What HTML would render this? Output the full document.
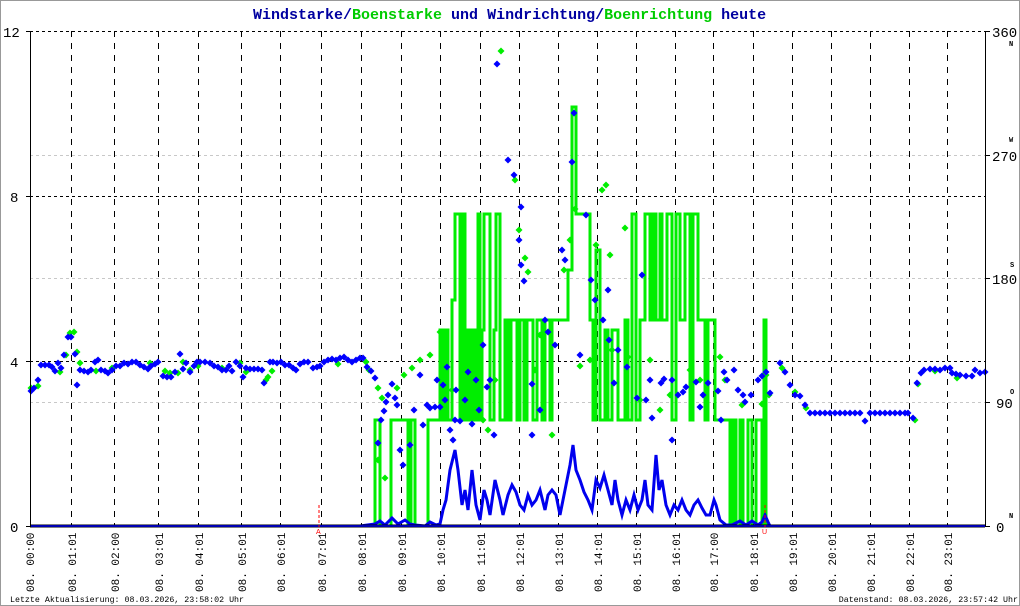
<!DOCTYPE html>
<html><head><meta charset="utf-8"><style>
html,body{margin:0;padding:0;background:#fff}
svg{display:block}
text{font-family:"Liberation Mono",monospace}
</style></head><body>
<svg width="1020" height="606" viewBox="0 0 1020 606" xmlns="http://www.w3.org/2000/svg">
<defs>
<marker id="db" markerUnits="userSpaceOnUse" markerWidth="8" markerHeight="8" refX="4" refY="4" viewBox="0 0 8 8"><path d="M4 0.5L7.5 4L4 7.5L0.5 4Z" fill="#0000ff"/></marker>
<marker id="dg" markerUnits="userSpaceOnUse" markerWidth="8" markerHeight="8" refX="4" refY="4" viewBox="0 0 8 8"><path d="M4 0.5L7.5 4L4 7.5L0.5 4Z" fill="#00ee00"/></marker>
</defs>
<rect x="0.5" y="0.5" width="1019" height="605" fill="#fff" stroke="#999"/>
<text x="253" y="19" font-size="15" font-weight="bold"><tspan fill="#0000a0">Windstarke/</tspan><tspan fill="#00cc00">Boenstarke</tspan><tspan fill="#0000a0"> und </tspan><tspan fill="#0000a0">Windrichtung/</tspan><tspan fill="#00cc00">Boenrichtung</tspan><tspan fill="#0000a0"> heute</tspan></text>
<g stroke="#000" stroke-width="1" stroke-dasharray="3,3">
<line x1="30" y1="31.5" x2="985" y2="31.5"/>
<line x1="30" y1="196.5" x2="985" y2="196.5"/>
<line x1="30" y1="361.5" x2="985" y2="361.5"/>
</g>
<g stroke="#c8c8c8" stroke-width="1" stroke-dasharray="3,3">
<line x1="30" y1="155.5" x2="985" y2="155.5"/>
<line x1="30" y1="278.5" x2="985" y2="278.5"/>
<line x1="30" y1="402.5" x2="985" y2="402.5"/>
</g>
<g stroke="#000" stroke-width="1" stroke-dasharray="6,6">
<line x1="71.5" y1="31" x2="71.5" y2="526"/><line x1="114.5" y1="31" x2="114.5" y2="526"/><line x1="158.5" y1="31" x2="158.5" y2="526"/><line x1="198.5" y1="31" x2="198.5" y2="526"/><line x1="241.5" y1="31" x2="241.5" y2="526"/><line x1="280.5" y1="31" x2="280.5" y2="526"/><line x1="321.5" y1="31" x2="321.5" y2="526"/><line x1="361.5" y1="31" x2="361.5" y2="526"/><line x1="401.5" y1="31" x2="401.5" y2="526"/><line x1="440.5" y1="31" x2="440.5" y2="526"/><line x1="480.5" y1="31" x2="480.5" y2="526"/><line x1="519.5" y1="31" x2="519.5" y2="526"/><line x1="558.5" y1="31" x2="558.5" y2="526"/><line x1="597.5" y1="31" x2="597.5" y2="526"/><line x1="636.5" y1="31" x2="636.5" y2="526"/><line x1="675.5" y1="31" x2="675.5" y2="526"/><line x1="713.5" y1="31" x2="713.5" y2="526"/><line x1="753.5" y1="31" x2="753.5" y2="526"/><line x1="792.5" y1="31" x2="792.5" y2="526"/><line x1="831.5" y1="31" x2="831.5" y2="526"/><line x1="870.5" y1="31" x2="870.5" y2="526"/><line x1="909.5" y1="31" x2="909.5" y2="526"/><line x1="947.5" y1="31" x2="947.5" y2="526"/>
</g>
<path fill="none" stroke="#00ee00" stroke-width="3" d="M360,526 H375 V420 H380 V526 H391 V420 H408 V526 H411 V420 H415 V526 H428 V420 H440 V330 H443 V420 H445 V330 H448 V420 H452 V300 H455 V214 H460 V420 H462 V214 H465 V420 H467 V330 H470 V420 H473 V330 H476 V420 H478 V214 H480 V420 H482 V330 H484 V214 H490 V420 H494 V330 H496 V214 H500 V420 H505 V320 H508 V420 H511 V320 H517 V420 H520 V320 H524 V420 H527 V320 H533 V420 H537 V320 H542 V420 H545 V320 H550 V420 H552 V320 H568 V270 H572 V107 H576 V214 H585 V214 H590 V320 H593 V420 H596 V250 H600 V420 H605 V330 H608 V420 H612 V330 H618 V420 H625 V320 H628 V420 H632 V214 H636 V420 H640 V320 H645 V214 H650 V320 H653 V214 H656 V320 H660 V214 H662 V320 H667 V214 H672 V420 H676 V214 H680 V320 H685 V214 H690 V420 H693 V214 H698 V320 H705 V420 H708 V320 H715 V420 H730 V526 H733 V420 H736 V526 H740 V420 H743 V526 H748 V420 H752 V526 H756 V420 H762 V526 H764 V320 H766 V526 H985"/>
<polyline fill="none" stroke="#0000ee" stroke-width="3" points="360,526 375,524 380,521 385,525 392,518 398,524 405,520 410,524 415,525 425,526 430,522 436,525 440,524 443,510 446,500 450,470 455,450 458,470 462,505 465,490 468,510 472,470 476,505 480,520 484,490 487,500 490,515 495,480 500,500 503,515 508,495 512,485 516,492 520,505 524,510 528,495 532,505 536,500 540,490 545,510 548,495 552,490 556,495 560,515 565,490 570,465 573,445 576,470 580,480 584,492 588,500 592,510 596,480 600,488 604,475 608,490 612,505 615,480 618,500 622,515 626,500 630,510 634,495 638,510 642,500 645,480 648,505 652,510 656,455 659,490 662,480 666,505 670,515 674,505 678,510 682,500 686,510 690,515 694,505 698,500 702,508 706,515 710,515 714,500 716,505 720,520 726,525 732,525 740,521 746,525 752,521 758,525 762,522 765,515 768,522 770,526 985,526"/>
<polyline fill="none" stroke="none" marker-start="url(#dg)" marker-mid="url(#dg)" marker-end="url(#dg)" points="31,388 38,386 60,372 66,355 70,333 74,332 77,352 80,363 96,371 112,368 150,363 165,371 170,373 178,373 183,362 190,370 198,366 222,368 240,363 246,372 266,380 268,377 272,371 338,364 366,362 369,370 378,388 382,398 378,460 385,478 397,388 404,375 412,368 420,360 430,355 440,332 443,360 452,390 466,390 483,420 488,430 495,380 501,51 515,180 519,230 525,258 528,272 535,370 540,335 552,435 564,270 570,240 575,209 580,366 590,360 596,245 602,190 606,185 610,255 612,350 625,228 628,357 640,400 650,360 660,410 670,395 690,370 700,380 720,357 725,380 742,405 762,404 769,395 766,375 782,368 795,392 806,408 915,420 918,384 935,371 957,378"/>
<polyline fill="none" stroke="none" marker-start="url(#db)" marker-mid="url(#db)" marker-end="url(#db)" points="31,391 34,388 38,380 41,365 45,365 49,365 52,367 55,371 58,363 61,368 64,355 68,337 71,337 75,354 77,385 80,370 84,371 88,372 91,370 95,362 98,360 101,370 105,371 108,373 112,370 116,366 120,366 124,363 128,364 132,362 136,362 140,365 144,367 148,369 151,366 155,364 158,362 163,376 167,377 171,377 175,372 180,354 183,369 186,363 190,372 194,366 197,362 200,362 205,362 210,363 214,366 218,367 222,370 226,370 229,366 232,371 236,362 240,366 243,377 246,368 250,369 254,369 258,369 262,370 264,383 270,362 273,362 277,363 281,362 285,365 289,365 293,368 296,370 300,364 304,362 308,362 313,368 317,367 320,366 324,362 328,360 332,359 336,360 340,358 344,357 348,360 352,362 356,360 360,358 363,358 367,367 371,371 375,378 378,443 381,420 384,411 386,402 388,395 392,384 395,398 397,405 400,450 403,465 410,445 414,410 420,375 423,425 427,405 430,408 435,407 437,380 440,407 443,385 445,400 447,367 450,430 453,440 455,420 456,390 460,421 465,400 468,372 472,424 476,380 479,410 483,345 487,387 490,380 494,435 497,64 508,160 514,175 519,240 521,265 524,281 521,207 532,384 532,435 540,410 545,320 548,332 555,345 562,250 565,260 572,162 574,113 580,355 586,215 591,280 595,300 603,320 608,290 609,340 614,383 618,350 627,367 637,398 646,400 652,418 650,380 642,275 661,383 664,379 672,380 672,440 678,395 683,392 686,387 696,382 700,407 703,395 708,383 718,391 721,420 724,372 727,380 734,370 738,390 743,395 745,402 751,395 758,380 762,376 766,372 770,393 780,363 785,372 790,385 795,395 800,396 805,405 810,413 815,413 820,413 825,413 830,413 835,413 840,413 845,413 850,413 855,413 860,413 865,421 870,413 875,413 880,413 885,413 890,413 895,413 900,413 905,413 908,413 913,418 917,383 921,373 924,370 930,369 935,369 940,370 945,368 950,368 952,373 956,374 960,375 966,376 972,376 975,370 980,373 985,372"/>
<line x1="30" y1="526" x2="985" y2="526" stroke="#000" stroke-width="3"/>
<line x1="30" y1="526" x2="985" y2="526" stroke="#0000ee" stroke-width="1.5"/>
<line x1="30.5" y1="31" x2="30.5" y2="527" stroke="#000"/>
<line x1="985.5" y1="31" x2="985.5" y2="527" stroke="#000"/>
<g stroke="#000"><line x1="26" y1="31.5" x2="30" y2="31.5"/><line x1="26" y1="196.5" x2="30" y2="196.5"/><line x1="26" y1="361.5" x2="30" y2="361.5"/><line x1="26" y1="526.5" x2="30" y2="526.5"/>
<line x1="985" y1="31.5" x2="990" y2="31.5"/><line x1="985" y1="155.5" x2="990" y2="155.5"/><line x1="985" y1="278.5" x2="990" y2="278.5"/><line x1="985" y1="402.5" x2="990" y2="402.5"/><line x1="985" y1="526.5" x2="990" y2="526.5"/></g>
<line x1="319" y1="505" x2="319" y2="527" stroke="#f00" stroke-dasharray="3,2"/>
<line x1="765" y1="505" x2="765" y2="527" stroke="#f00" stroke-dasharray="3,2"/>
<text x="316" y="534" font-size="7" fill="#f00" style="font-family:'Liberation Sans',sans-serif">A</text>
<text x="762" y="534" font-size="7" fill="#f00" style="font-family:'Liberation Sans',sans-serif">U</text>
<g font-size="14" fill="#000" style="font-family:'Liberation Sans',sans-serif">
<text x="3" y="37">12</text><text x="10" y="202">8</text><text x="10" y="367">4</text><text x="10" y="532">0</text>
<text x="992" y="37">360</text><text x="992" y="161">270</text><text x="992" y="284">180</text><text x="996" y="408">90</text><text x="996" y="532">0</text>
</g>
<g font-size="7" font-weight="bold" fill="#000" style="font-family:'Liberation Sans',sans-serif">
<text x="1009" y="46">N</text><text x="1009" y="142">W</text><text x="1010" y="267">S</text><text x="1010" y="394">O</text><text x="1009" y="518">N</text>
</g>
<g font-size="11" fill="#000">
<text transform="translate(34,592) rotate(-90)">08. 00:00</text>
<text transform="translate(76,592) rotate(-90)">08. 01:01</text>
<text transform="translate(119,592) rotate(-90)">08. 02:00</text>
<text transform="translate(163,592) rotate(-90)">08. 03:01</text>
<text transform="translate(203,592) rotate(-90)">08. 04:01</text>
<text transform="translate(246,592) rotate(-90)">08. 05:01</text>
<text transform="translate(285,592) rotate(-90)">08. 06:01</text>
<text transform="translate(326,592) rotate(-90)">08. 07:01</text>
<text transform="translate(366,592) rotate(-90)">08. 08:01</text>
<text transform="translate(406,592) rotate(-90)">08. 09:01</text>
<text transform="translate(445,592) rotate(-90)">08. 10:01</text>
<text transform="translate(485,592) rotate(-90)">08. 11:01</text>
<text transform="translate(524,592) rotate(-90)">08. 12:01</text>
<text transform="translate(563,592) rotate(-90)">08. 13:01</text>
<text transform="translate(602,592) rotate(-90)">08. 14:01</text>
<text transform="translate(641,592) rotate(-90)">08. 15:01</text>
<text transform="translate(680,592) rotate(-90)">08. 16:01</text>
<text transform="translate(718,592) rotate(-90)">08. 17:00</text>
<text transform="translate(758,592) rotate(-90)">08. 18:01</text>
<text transform="translate(797,592) rotate(-90)">08. 19:01</text>
<text transform="translate(836,592) rotate(-90)">08. 20:01</text>
<text transform="translate(875,592) rotate(-90)">08. 21:01</text>
<text transform="translate(914,592) rotate(-90)">08. 22:01</text>
<text transform="translate(952,592) rotate(-90)">08. 23:01</text>
</g>
<text x="10" y="602" font-size="8.3" fill="#000">Letzte Aktualisierung: 08.03.2026, 23:58:02 Uhr</text>
<text x="1018" y="602" font-size="8.3" fill="#000" text-anchor="end">Datenstand: 08.03.2026, 23:57:42 Uhr</text>
</svg>
</body></html>
